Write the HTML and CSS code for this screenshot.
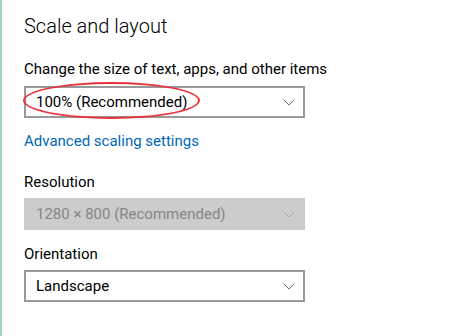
FILE: index.html
```html
<!DOCTYPE html>
<html>
<head>
<meta charset="utf-8">
<link rel="stylesheet" href="styles.css">
</head>
<body>
<div class="page">
  <div class="content">
    <h1 class="title">Scale and layout</h1>
    <div class="label first">Change the size of text, apps, and other items</div>
    <div class="select-wrap">
      <div class="select">
        <span class="value">100% (Recommended)</span>
        <svg class="chev" width="12" height="7" viewBox="0 0 12 7"><path d="M0.5 0.5 L6 6 L11.5 0.5" fill="none" stroke="#707070" stroke-width="1"/></svg>
      </div>
      <div class="ellipse"></div>
    </div>
    <a class="link">Advanced scaling settings</a>
    <div class="label">Resolution</div>
    <div class="select disabled">
      <span class="value">1280 × 800 (Recommended)</span>
      <svg class="chev" width="12" height="7" viewBox="0 0 12 7"><path d="M0.5 0.5 L6 6 L11.5 0.5" fill="none" stroke="#a8a8a8" stroke-width="1"/></svg>
    </div>
    <div class="label orient">Orientation</div>
    <div class="select">
      <span class="value">Landscape</span>
      <svg class="chev" width="12" height="7" viewBox="0 0 12 7"><path d="M0.5 0.5 L6 6 L11.5 0.5" fill="none" stroke="#707070" stroke-width="1"/></svg>
    </div>
  </div>
</div>
</body>
</html>
```
FILE: styles.css
```css
html, body {
  margin: 0;
  padding: 0;
  background: #ffffff;
}
.page {
  width: 475px;
  height: 336px;
  border-left: 2px solid #9fd3c3;
  box-sizing: border-box;
  overflow: hidden;
  font-family: Roboto, "Liberation Sans", sans-serif;
  color: #000;
}
.content {
  padding: 12px 0 0 22px;
  display: flex;
  flex-direction: column;
  align-items: flex-start;
}
.title {
  margin: 0;
  font-size: 20px;
  font-weight: 300;
  line-height: 28px;
}
.label {
  font-size: 15px;
  line-height: 20px;
  margin-top: 14px;
}
.label.first {
  margin-top: 19px;
}
.select-wrap {
  position: relative;
  margin-top: 7px;
}
.select {
  width: 281px;
  height: 32px;
  box-sizing: border-box;
  border: 2px solid #999999;
  display: flex;
  align-items: center;
  justify-content: space-between;
  padding: 0 8px 0 10px;
  font-size: 15px;
  margin-top: 6px;
}
.select-wrap .select {
  margin-top: 0;
}
.select.disabled {
  background: #cccccc;
  border-color: #cccccc;
  color: #858585;
}
.chev {
  display: block;
}
.ellipse {
  position: absolute;
  left: -1px;
  top: -4px;
  width: 177px;
  height: 37px;
  border: 2px solid #e8323a;
  border-radius: 50%;
  box-sizing: border-box;
}
.link {
  color: #0067b8;
  font-size: 15px;
  line-height: 20px;
  margin-top: 13px;
  margin-bottom: 21px;
}
.link + .label {
  margin-top: 0;
}
```
